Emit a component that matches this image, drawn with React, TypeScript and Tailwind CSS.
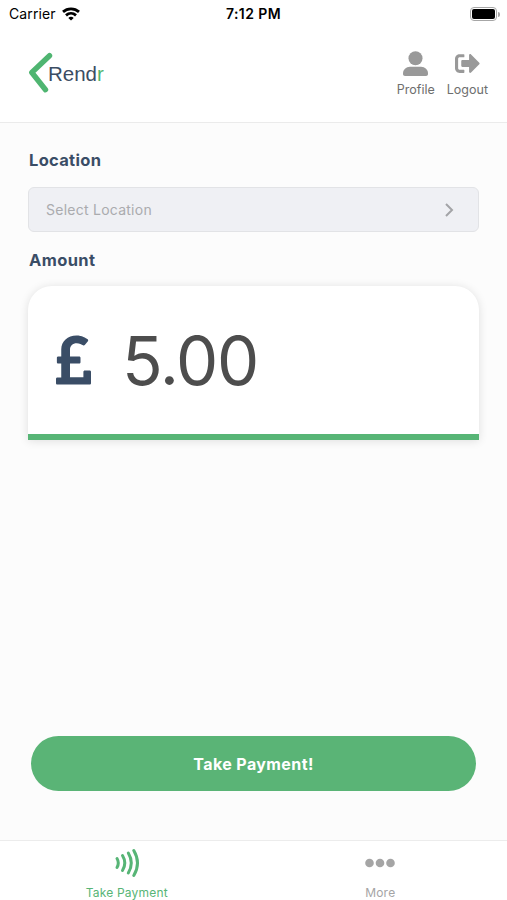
import { FaPoundSign, FaSignOutAlt } from 'react-icons/fa';

function StatusBar() {
    return (
        <div className="relative flex h-7 items-center justify-between pl-[9px] pr-[7px] text-black">
            <div className="flex items-center gap-[6px]">
                <span className="text-[14px] leading-5 tracking-[0.1px]">Carrier</span>
                <svg width="18" height="14" viewBox="0 0 18 14" fill="none" stroke="currentColor" strokeWidth="2.8">
                    <path d="M1 4.9C5.5.9 12.5.9 17 4.9" />
                    <path d="M4 8.4c2.9-2.6 7.1-2.6 10 0" />
                    <path d="M9 13.5 6.3 10.9c1.5-1.4 3.9-1.4 5.4 0Z" fill="currentColor" stroke="none" />
                </svg>
            </div>
            <span className="absolute left-1/2 -translate-x-1/2 text-[14px] font-semibold leading-5 tracking-[0.4px]">
                7:12 PM
            </span>
            <div className="flex items-center gap-px">
                <div className="h-[14px] w-[27px] rounded-[4px] border border-[#a6a6a6] p-px">
                    <div className="h-full rounded-[2px] bg-black" />
                </div>
                <div className="h-[5px] w-[2px] rounded-r-full bg-[#a6a6a6]" />
            </div>
        </div>
    );
}

function Logo() {
    return (
        <div className="flex items-center">
            <svg width="25" height="42" viewBox="0 0 25 42" fill="none" stroke="#4fb571" strokeWidth="5.4" strokeLinecap="round" strokeLinejoin="round">
                <path d="M21.5 3.7 3.8 20.5 17.5 37.7" />
            </svg>
            <span className="-ml-[5px] mt-[2px] font-['Liberation_Sans',Arial,sans-serif] text-[20.5px] leading-6 text-[#3b4d63]">
                Rend<span className="text-[#4fb571]">r</span>
            </span>
        </div>
    );
}

function Header() {
    return (
        <header className="flex h-[95px] justify-between border-b border-[#ebebeb] pl-7 pr-[19px]">
            <div className="pt-6">
                <Logo />
            </div>
            <div className="flex gap-3 pt-[23px] text-[12.5px] leading-4 text-[#6e6e6e]">
                <button className="flex flex-col items-center gap-[6px] self-start">
                    <svg width="25" height="25" viewBox="0 0 25 25" fill="#999999">
                        <circle cx="12.5" cy="7.2" r="7" />
                        <path d="M7 15.8h11c4 0 7 3 7 6.700v.5c0 1.200-.8 2-2 2H2c-1.200 0-2-.8-2-2v-.5c0-3.700 3-6.700 7-6.700Z" />
                    </svg>
                    Profile
                </button>
                <button className="flex flex-col items-center gap-[6px] self-start">
                    <FaSignOutAlt size={25} color="#999999" />
                    Logout
                </button>
            </div>
        </header>
    );
}

function TabBar() {
    return (
        <nav className="grid h-[60px] grid-cols-2 border-t border-[#ececec] bg-white text-[12px] leading-4 tracking-[0.2px]">
            <button className="flex flex-col items-center pt-[7px] text-[#57b576]">
                <svg width="26" height="30" viewBox="0 0 26 30" fill="none" stroke="currentColor" strokeWidth="3" strokeLinecap="round">
                    <path d="M3 10.5q2.6 4.5 0 9" />
                    <path d="M8.5 7.5q4.6 7.5 0 15" />
                    <path d="M14.3 5q6 10 0 20" />
                    <path d="M19.8 2.5q7.4 12.5 0 25" />
                </svg>
                <span className="mt-[7px]">Take Payment</span>
            </button>
            <button className="flex flex-col items-center pt-[7px] text-[#a5a5a5]">
                <svg width="30" height="30" viewBox="0 0 30 30" fill="currentColor">
                    <circle cx="4.5" cy="15" r="4.3" />
                    <circle cx="15" cy="15" r="4.3" />
                    <circle cx="25.5" cy="15" r="4.3" />
                </svg>
                <span className="mt-[7px]">More</span>
            </button>
        </nav>
    );
}

export default function App() {
    return (
        <div className="flex h-screen flex-col bg-white font-['Inter',sans-serif]">
            <StatusBar />
            <Header />

            <main className="flex flex-1 flex-col bg-[#fcfcfc] px-7 pt-[25px]">
                {/* Location */}
                <h2 className="pl-px text-[16.5px] font-bold leading-6 tracking-[0.3px] text-[#3a4d66]">Location</h2>
                <button className="mt-[15px] flex h-[45px] items-center justify-between rounded-[6px] border border-[#e2e3e6] bg-[#eff0f4] pl-[17px] pr-6 text-[14px] tracking-[0.25px] text-[#aaabae]">
                    Select Location
                    <svg width="9" height="14" viewBox="0 0 9 14" fill="none" stroke="#a3a4a7" strokeWidth="2">
                        <path d="M1 1l6 6-6 6" />
                    </svg>
                </button>

                {/* Amount */}
                <h2 className="mt-4 pl-px text-[16.5px] font-bold leading-6 tracking-[0.4px] text-[#3a4d66]">Amount</h2>
                <div className="mt-[14px] flex h-[154px] items-center rounded-t-[24px] border-b-[6px] border-[#57b576] bg-white pl-7 shadow-[0_1px_10px_rgba(0,0,0,0.12)]">
                    <FaPoundSign className="h-14 w-[35px] text-[#3a4d66]" />
                    <span className="ml-[31px] text-[67px] leading-none tracking-[-1.3px] text-[#4d4d4d]">5.00</span>
                </div>

                <button className="mx-[3px] mb-[49px] mt-auto h-[55px] rounded-full bg-[#5ab476] text-[16px] font-bold tracking-[0.4px] text-white">
                    Take Payment!
                </button>
            </main>

            <TabBar />
        </div>
    );
}
